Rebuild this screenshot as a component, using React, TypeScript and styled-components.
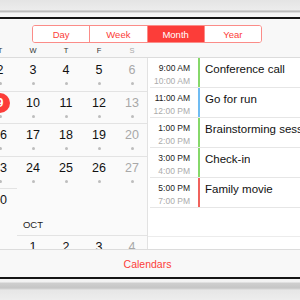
import styled, { createGlobalStyle } from "styled-components";

const GlobalStyle = createGlobalStyle`
  html, body {
    margin: 0;
    padding: 0;
    background: #ffffff;
  }
  body {
    font-family: "Liberation Sans", Arial, sans-serif;
    -webkit-font-smoothing: antialiased;
  }
`;

const RED = "#fc3d39";

const Device = styled.div`
  width: 300px;
  height: 300px;
  display: flex;
  flex-direction: column;
  overflow: hidden;
`;

const TopBezel = styled.div`
  height: 17px;
  flex-shrink: 0;
  background: linear-gradient(
    to bottom,
    #e4e4e4 0px,
    #ececec 10px,
    #b4b4b4 11px,
    #c4c4c4 12px,
    #f4f4f4 13px,
    #f6f6f6 17px
  );
`;

const BlackEdge = styled.div`
  height: 2px;
  flex-shrink: 0;
  background: #161616;
`;

const BottomBezel = styled.div`
  flex: 1;
  background: linear-gradient(
    to bottom,
    #f4f4f4 0px,
    #f2f2f2 3px,
    #cfcfcf 4px,
    #c6c6c6 9px,
    #e6e6e6 11px,
    #ededed 21px
  );
`;

const Screen = styled.div`
  height: 258px;
  flex-shrink: 0;
  display: flex;
  flex-direction: column;
  background: #fff;
`;

const Header = styled.div`
  height: 38px;
  flex-shrink: 0;
  background: #f8f8f8;
  border-bottom: 1px solid #dcdcdc;
  display: flex;
  flex-direction: column;
`;

const Segmented = styled.div`
  margin: 6px 0 0 32px;
  width: 230px;
  height: 18px;
  display: flex;
  border: 1px solid #fb8c88;
  border-radius: 3px;
  overflow: hidden;
  box-sizing: border-box;
  background: #fff;
`;

const Segment = styled.div<{ $active?: boolean }>`
  flex: 1;
  display: flex;
  align-items: center;
  justify-content: center;
  font-size: 9.5px;
  color: ${({ $active }) => ($active ? "#fff" : RED)};
  background: ${({ $active }) => ($active ? RED : "#fff")};
  & + & {
    border-left: 1px solid #fb8c88;
  }
`;

const WeekdayRow = styled.div`
  margin-left: -82.5px;
  display: grid;
  grid-template-columns: repeat(7, 33px);
  margin-top: 3px;
`;

const Weekday = styled.div<{ $weekend?: boolean }>`
  text-align: center;
  font-size: 7.5px;
  line-height: 10px;
  color: ${({ $weekend }) => ($weekend ? "#a8a8a8" : "#333")};
`;

const Body = styled.div`
  flex: 1;
  display: flex;
  min-height: 0;
`;

const MonthPane = styled.div`
  width: 147px;
  flex-shrink: 0;
  border-right: 1px solid #e2e2e2;
  background: #fafafa;
  overflow: hidden;
`;

const MonthGrid = styled.div`
  margin-left: -82.5px;
  width: 231px;
  display: grid;
  grid-template-columns: repeat(7, 33px);
`;

const DayCell = styled.div<{ $line?: boolean; $h?: number }>`
  height: ${({ $h }) => $h ?? 32.5}px;
  box-sizing: border-box;
  border-top: 1px solid ${({ $line }) => ($line ? "#e3e3e3" : "transparent")};
  display: flex;
  flex-direction: column;
  align-items: center;
  padding-top: 1px;
`;

const DayNum = styled.div<{ $weekend?: boolean; $today?: boolean }>`
  width: 20px;
  height: 20px;
  border-radius: 50%;
  display: flex;
  align-items: center;
  justify-content: center;
  font-size: 12.5px;
  color: ${({ $weekend, $today }) =>
    $today ? "#fff" : $weekend ? "#a8a8a8" : "#111"};
  background: ${({ $today }) => ($today ? RED : "transparent")};
  font-weight: ${({ $today }) => ($today ? "bold" : "normal")};
`;

const Dot = styled.div`
  width: 3px;
  height: 3px;
  border-radius: 50%;
  background: #bdbdbd;
  margin-top: 2px;
`;

const MonthLabel = styled.div`
  grid-column: 4 / span 1;
  height: 14.5px;
  font-size: 9.5px;
  line-height: 10px;
  color: #222;
  text-align: center;
`;

const Spacer = styled.div<{ $span: number }>`
  grid-column: span ${({ $span }) => $span};
`;

const EventPane = styled.div`
  flex: 1;
  min-width: 0;
  display: flex;
  flex-direction: column;
  overflow: hidden;
`;

const EventRow = styled.div`
  height: 30px;
  flex-shrink: 0;
  margin-left: 2px;
  border-bottom: 1px solid #e6e6e6;
  box-sizing: border-box;
  display: flex;
`;

const Times = styled.div`
  width: 40px;
  flex-shrink: 0;
  text-align: right;
  padding-top: 4px;
  font-size: 8.5px;
  line-height: 13px;
  color: #222;
`;

const EndTime = styled.div`
  color: #ababab;
`;

const Bar = styled.div<{ $color: string }>`
  width: 2px;
  margin-left: 8px;
  flex-shrink: 0;
  background: ${({ $color }) => $color};
`;

const Title = styled.div`
  padding: 2px 0 0 5px;
  font-size: 11.5px;
  line-height: 18px;
  color: #111;
  white-space: nowrap;
  overflow: hidden;
`;

const EmptyBlock = styled.div`
  height: 28px;
  flex-shrink: 0;
  border-bottom: 1px solid #ececec;
`;

const Toolbar = styled.div`
  height: 28px;
  flex-shrink: 0;
  background: #f8f8f8;
  border-top: 1px solid #dcdcdc;
  box-sizing: border-box;
  display: flex;
  align-items: center;
  justify-content: center;
  padding-right: 5px;
  font-size: 10.5px;
  color: ${RED};
`;

const weekdays = ["S", "M", "T", "W", "T", "F", "S"];

const septWeeks = [
  [31, 1, 2, 3, 4, 5, 6],
  [7, 8, 9, 10, 11, 12, 13],
  [14, 15, 16, 17, 18, 19, 20],
  [21, 22, 23, 24, 25, 26, 27],
];

const events = [
  { start: "9:00 AM", end: "10:00 AM", title: "Conference call", color: "#86d86a" },
  { start: "11:00 AM", end: "12:00 PM", title: "Go for run", color: "#6fbcf2" },
  { start: "1:00 PM", end: "2:00 PM", title: "Brainstorming session", color: "#86d86a" },
  { start: "3:00 PM", end: "4:00 PM", title: "Check-in", color: "#86d86a" },
  { start: "5:00 PM", end: "7:00 PM", title: "Family movie", color: "#f0625c" },
];

const App = () => {
  return (
    <>
      <GlobalStyle />
      <Device>
        <TopBezel />
        <BlackEdge />
        <Screen>
          <Header>
            <Segmented>
              <Segment>Day</Segment>
              <Segment>Week</Segment>
              <Segment $active>Month</Segment>
              <Segment>Year</Segment>
            </Segmented>
            <WeekdayRow>
              {weekdays.map((d, i) => (
                <Weekday key={i} $weekend={i === 0 || i === 6}>
                  {d}
                </Weekday>
              ))}
            </WeekdayRow>
          </Header>
          <Body>
            <MonthPane>
              <MonthGrid>
                {septWeeks.map((week, w) =>
                  week.map((n, i) => (
                    <DayCell key={`${w}-${i}`} $line={w > 0}>
                      <DayNum $weekend={i === 6} $today={n === 9}>
                        {n}
                      </DayNum>
                      <Dot />
                    </DayCell>
                  ))
                )}
                {[28, 29, 30].map((n) => (
                  <DayCell key={n} $line $h={32}>
                    <DayNum>{n}</DayNum>
                  </DayCell>
                ))}
                <Spacer $span={4} />
                <Spacer $span={3} />
                <MonthLabel>OCT</MonthLabel>
                <Spacer $span={3} />
                <Spacer $span={3} />
                {[1, 2, 3, 4].map((n) => (
                  <DayCell key={`oct-${n}`} $line>
                    <DayNum $weekend={n === 4}>{n}</DayNum>
                  </DayCell>
                ))}
              </MonthGrid>
            </MonthPane>
            <EventPane>
              {events.map((e) => (
                <EventRow key={e.title}>
                  <Times>
                    <div>{e.start}</div>
                    <EndTime>{e.end}</EndTime>
                  </Times>
                  <Bar $color={e.color} />
                  <Title>{e.title}</Title>
                </EventRow>
              ))}
              <EmptyBlock />
            </EventPane>
          </Body>
          <Toolbar>Calendars</Toolbar>
        </Screen>
        <BlackEdge />
        <BottomBezel />
      </Device>
    </>
  );
};

export default App;
